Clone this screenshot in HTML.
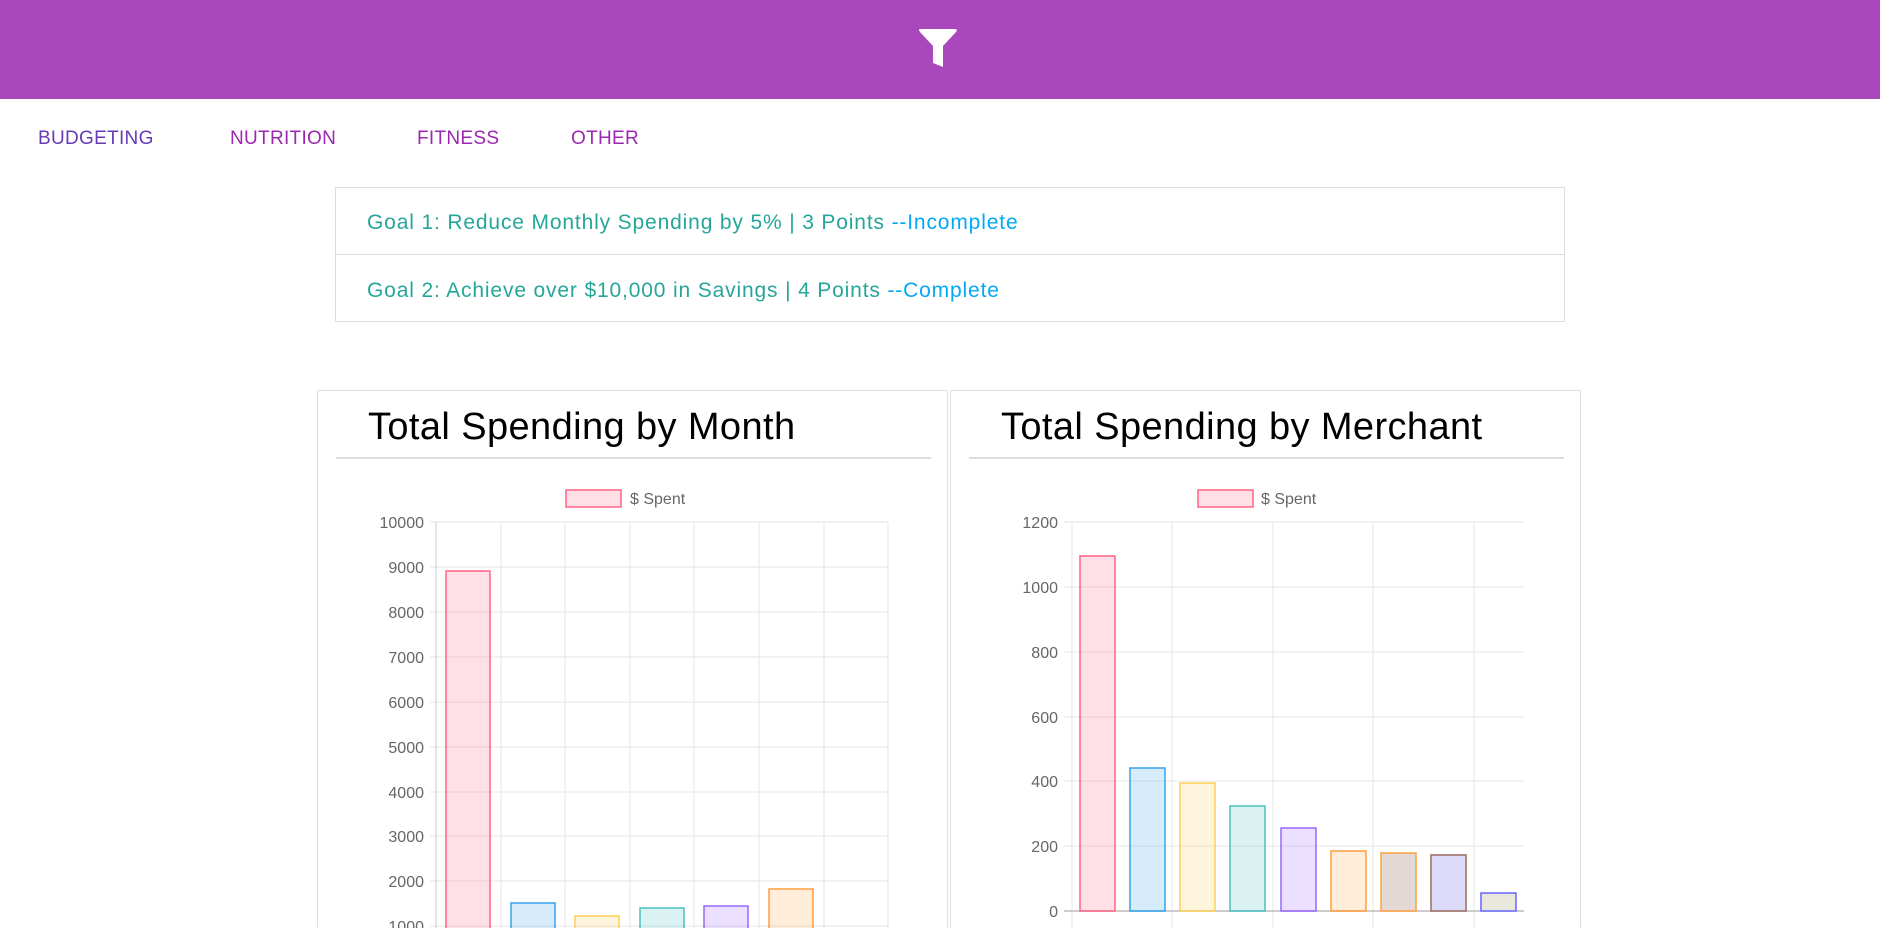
<!DOCTYPE html>
<html><head><meta charset="utf-8"><style>
html,body{margin:0;padding:0;width:1880px;height:928px;overflow:hidden;background:#fff;font-family:"Liberation Sans",sans-serif;}
#wrap{position:relative;width:1880px;height:928px;overflow:hidden;}
.hdr{position:absolute;left:0;top:0;width:1880px;height:99px;background:#ab47bc;}
.nav{position:absolute;top:128px;font-size:19px;color:#9c27b0;letter-spacing:0.3px;}
.goals{position:absolute;left:335px;top:187px;width:1228px;height:133px;border:1px solid #ddd;}
.goal{position:absolute;left:31px;font-size:21px;color:#26a69a;letter-spacing:0.85px;}
.goal span{color:#03a9f4;}
.card{position:absolute;top:390px;width:629px;height:537px;border:1px solid #ddd;border-bottom:none;border-radius:2px;}
.card h2{position:absolute;left:50px;top:15px;margin:0;font-weight:normal;font-size:38px;color:#000;letter-spacing:0.4px;}
.card .ul{position:absolute;left:18px;right:16px;top:66px;height:2px;background:#ddd;}
</style></head><body><div id="wrap">
<div class="hdr"><svg width="1880" height="99" style="position:absolute;left:0;top:0"><path d="M920 29 H955 Q958 29 956 32 L943 46 V67 L933 63 V46 L920 32 Q918 29 920 29 Z" fill="#fff"/></svg></div>
<div class="nav" style="left:38px;color:#673ab7">BUDGETING</div>
<div class="nav" style="left:230px">NUTRITION</div>
<div class="nav" style="left:417px">FITNESS</div>
<div class="nav" style="left:571px">OTHER</div>
<div class="goals">
<div class="goal" style="top:23px">Goal 1: Reduce Monthly Spending by 5% | 3 Points <span>--Incomplete</span></div>
<div style="position:absolute;left:0;right:0;top:66px;height:1px;background:#ddd"></div>
<div class="goal" style="top:91px">Goal 2: Achieve over $10,000 in Savings | 4 Points <span>--Complete</span></div>
</div>
<div class="card" style="left:317px"><h2>Total Spending by Month</h2><div class="ul"></div></div>
<div class="card" style="left:950px"><h2>Total Spending by Merchant</h2><div class="ul"></div></div>
<svg width="1880" height="928" style="position:absolute;left:0;top:0" font-family="Liberation Sans, sans-serif" font-size="16" fill="#666">
<rect x="566" y="490" width="55" height="17" fill="rgba(255,99,132,0.2)" stroke="#ff6384" stroke-width="1.5"/>
<text x="630" y="504">$ Spent</text>
<g stroke="#e5e5e5" stroke-width="1">
<line x1="430" x2="888" y1="522" y2="522"/><line x1="430" x2="888" y1="567" y2="567"/><line x1="430" x2="888" y1="612" y2="612"/><line x1="430" x2="888" y1="657" y2="657"/><line x1="430" x2="888" y1="702" y2="702"/><line x1="430" x2="888" y1="747" y2="747"/><line x1="430" x2="888" y1="792" y2="792"/><line x1="430" x2="888" y1="836" y2="836"/><line x1="430" x2="888" y1="881" y2="881"/><line x1="430" x2="888" y1="926" y2="926"/>
<line x1="501" x2="501" y1="522" y2="928"/><line x1="565" x2="565" y1="522" y2="928"/><line x1="630" x2="630" y1="522" y2="928"/><line x1="694" x2="694" y1="522" y2="928"/><line x1="759" x2="759" y1="522" y2="928"/><line x1="824" x2="824" y1="522" y2="928"/><line x1="888" x2="888" y1="522" y2="928"/>
</g>
<line x1="436" x2="436" y1="522" y2="928" stroke="#ccc"/>
<g text-anchor="end">
<text x="424" y="528">10000</text><text x="424" y="573">9000</text><text x="424" y="618">8000</text><text x="424" y="663">7000</text><text x="424" y="708">6000</text><text x="424" y="753">5000</text><text x="424" y="798">4000</text><text x="424" y="842">3000</text><text x="424" y="887">2000</text><text x="424" y="932">1000</text>
</g>
<g stroke-width="1.5">
<rect x="446" y="571" width="44" height="400" fill="rgba(255,99,132,0.2)" stroke="#ff6384"/>
<rect x="511" y="903" width="44" height="80" fill="rgba(54,162,235,0.2)" stroke="#36a2eb"/>
<rect x="575" y="916" width="44" height="80" fill="rgba(255,206,86,0.2)" stroke="#ffce56"/>
<rect x="640" y="908" width="44" height="80" fill="rgba(75,192,192,0.2)" stroke="#4bc0c0"/>
<rect x="704" y="906" width="44" height="80" fill="rgba(153,102,255,0.2)" stroke="#9966ff"/>
<rect x="769" y="889" width="44" height="80" fill="rgba(255,159,64,0.2)" stroke="#ff9f40"/>
</g>
<rect x="1198" y="490" width="55" height="17" fill="rgba(255,99,132,0.2)" stroke="#ff6384" stroke-width="1.5"/>
<text x="1261" y="504">$ Spent</text>
<g stroke="#e5e5e5" stroke-width="1">
<line x1="1064" x2="1524" y1="522" y2="522"/><line x1="1064" x2="1524" y1="587" y2="587"/><line x1="1064" x2="1524" y1="652" y2="652"/><line x1="1064" x2="1524" y1="717" y2="717"/><line x1="1064" x2="1524" y1="781" y2="781"/><line x1="1064" x2="1524" y1="846" y2="846"/>
<line x1="1072" x2="1072" y1="522" y2="928"/><line x1="1172" x2="1172" y1="522" y2="928"/><line x1="1273" x2="1273" y1="522" y2="928"/><line x1="1373" x2="1373" y1="522" y2="928"/><line x1="1474" x2="1474" y1="522" y2="928"/>
</g>
<line x1="1064" x2="1524" y1="911" y2="911" stroke="#bbb" stroke-width="1.5"/>
<g text-anchor="end">
<text x="1058" y="528">1200</text><text x="1058" y="593">1000</text><text x="1058" y="658">800</text><text x="1058" y="723">600</text><text x="1058" y="787">400</text><text x="1058" y="852">200</text><text x="1058" y="917">0</text>
</g>
<g stroke-width="1.5">
<rect x="1080" y="556" width="35" height="355" fill="rgba(255,99,132,0.2)" stroke="#ff6384"/>
<rect x="1130" y="768" width="35" height="143" fill="rgba(54,162,235,0.2)" stroke="#36a2eb"/>
<rect x="1180" y="783" width="35" height="128" fill="rgba(255,206,86,0.2)" stroke="#ffce56"/>
<rect x="1230" y="806" width="35" height="105" fill="rgba(75,192,192,0.2)" stroke="#4bc0c0"/>
<rect x="1281" y="828" width="35" height="83" fill="rgba(153,102,255,0.2)" stroke="#9966ff"/>
<rect x="1331" y="851" width="35" height="60" fill="rgba(255,159,64,0.2)" stroke="#ff9f40"/>
<rect x="1381" y="853" width="35" height="58" fill="#e2d9d5" stroke="#ff9f40"/>
<rect x="1431" y="855" width="35" height="56" fill="#dcdcfa" stroke="#9a6a5e"/>
<rect x="1481" y="893" width="35" height="18" fill="#e8e8dc" stroke="#6666ff"/>
</g>
</svg>
</div></body></html>
